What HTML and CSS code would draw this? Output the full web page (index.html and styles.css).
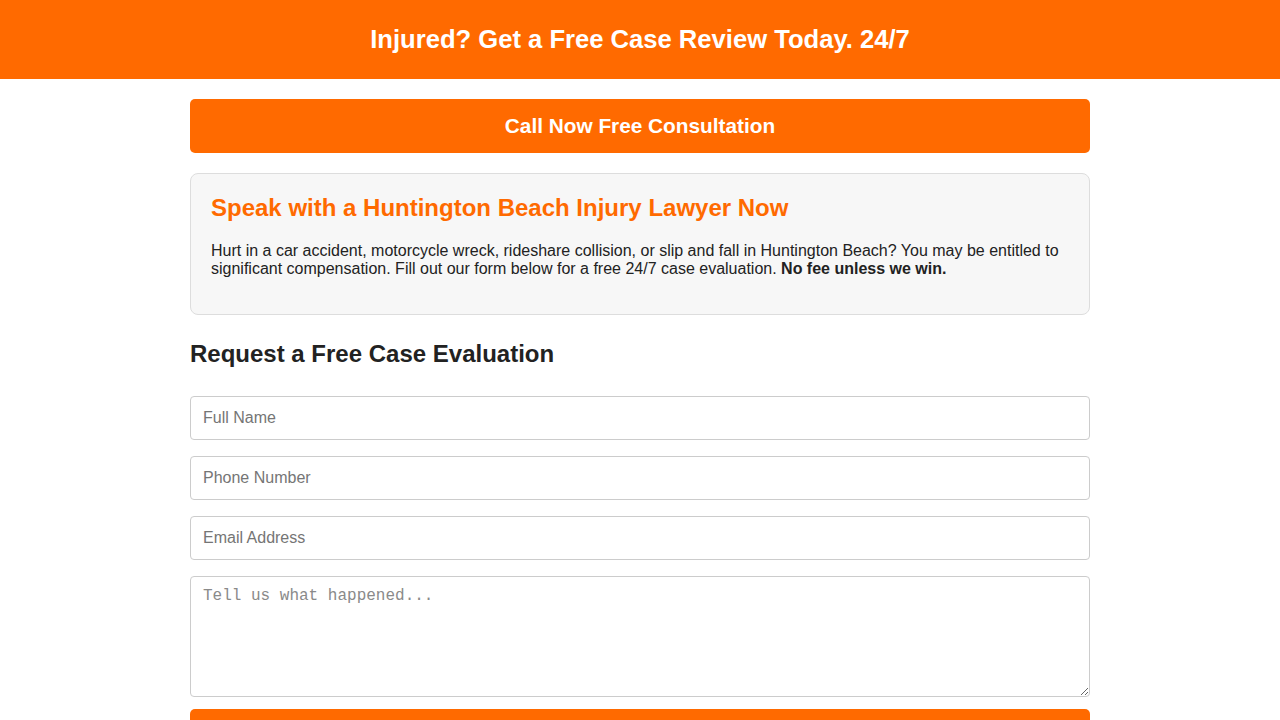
FILE: index.html
```html
<!DOCTYPE html>
<html lang="en">
<head>
<meta charset="utf-8">
<title>Huntington Beach Injury Lawyer</title>
<link rel="stylesheet" href="styles.css">
</head>
<body>
<header class="topbar">
  <h1 class="topbar-title">Injured? Get a Free Case Review Today. 24/7</h1>
</header>
<main class="container">
  <a class="btn btn-call" href="#">Call Now Free Consultation</a>
  <section class="intro">
    <h2 class="intro-title">Speak with a Huntington Beach Injury Lawyer Now</h2>
    <p class="intro-text">Hurt in a car accident, motorcycle wreck, rideshare collision, or slip and fall in Huntington Beach? You may be entitled to significant compensation. Fill out our form below for a free 24/7 case evaluation. <strong>No fee unless we win.</strong></p>
  </section>
  <h2 class="form-title">Request a Free Case Evaluation</h2>
  <form class="case-form">
    <input class="field" type="text" placeholder="Full Name">
    <input class="field" type="tel" placeholder="Phone Number">
    <input class="field" type="email" placeholder="Email Address">
    <textarea class="field field-area" placeholder="Tell us what happened..."></textarea>
    <button class="btn btn-submit" type="button">Get My Free Case Review</button>
  </form>
</main>
</body>
</html>
```
FILE: styles.css
```css
html, body {
  margin: 0;
  padding: 0;
  background: #ffffff;
}
body {
  font-family: "Liberation Sans", Arial, sans-serif;
  color: #222222;
  font-size: 16px;
}
.topbar {
  background: #ff6a00;
  padding: 24px 20px;
  text-align: center;
}
.topbar-title {
  margin: 0;
  color: #ffffff;
  font-size: 25.6px;
  line-height: 31px;
  font-weight: bold;
}
.container {
  width: 900px;
  margin: 0 auto;
  padding-top: 20px;
}
.btn {
  display: block;
  box-sizing: border-box;
  width: 100%;
  background: #ff6a00;
  color: #ffffff;
  text-align: center;
  text-decoration: none;
  font-family: "Liberation Sans", Arial, sans-serif;
  font-weight: bold;
  font-size: 20.8px;
  line-height: 24px;
  padding: 15px;
  border: none;
  border-radius: 5px;
}
.intro {
  margin-top: 20px;
  background: #f7f7f7;
  border: 1px solid #dddddd;
  border-radius: 8px;
  padding: 20px;
}
.intro-title {
  margin: 0 0 20px;
  color: #ff6a00;
  font-size: 24px;
  line-height: 28px;
}
.intro-text {
  margin: 0 0 16px;
  line-height: 18px;
}
.form-title {
  margin: 25px 0 28px;
  font-size: 24px;
  line-height: 28px;
  color: #222222;
}
.case-form {
  display: flex;
  flex-direction: column;
  gap: 16px;
}
.field {
  display: block;
  box-sizing: border-box;
  width: 100%;
  height: 44px;
  margin: 0;
  padding: 12px;
  border: 1px solid #cccccc;
  border-radius: 4px;
  font-family: "Liberation Sans", Arial, sans-serif;
  font-size: 16px;
  line-height: 18px;
  color: #222222;
  background: #ffffff;
}
.field::placeholder {
  color: #757575;
}
.field-area {
  height: 121px;
  padding-top: 10px;
  font-family: "Liberation Mono", "Courier New", monospace;
  font-size: 16px;
  resize: vertical;
}
.field-area::placeholder {
  color: #8a8a8a;
}
.btn-submit {
  margin-top: -4px;
  cursor: pointer;
}
```
